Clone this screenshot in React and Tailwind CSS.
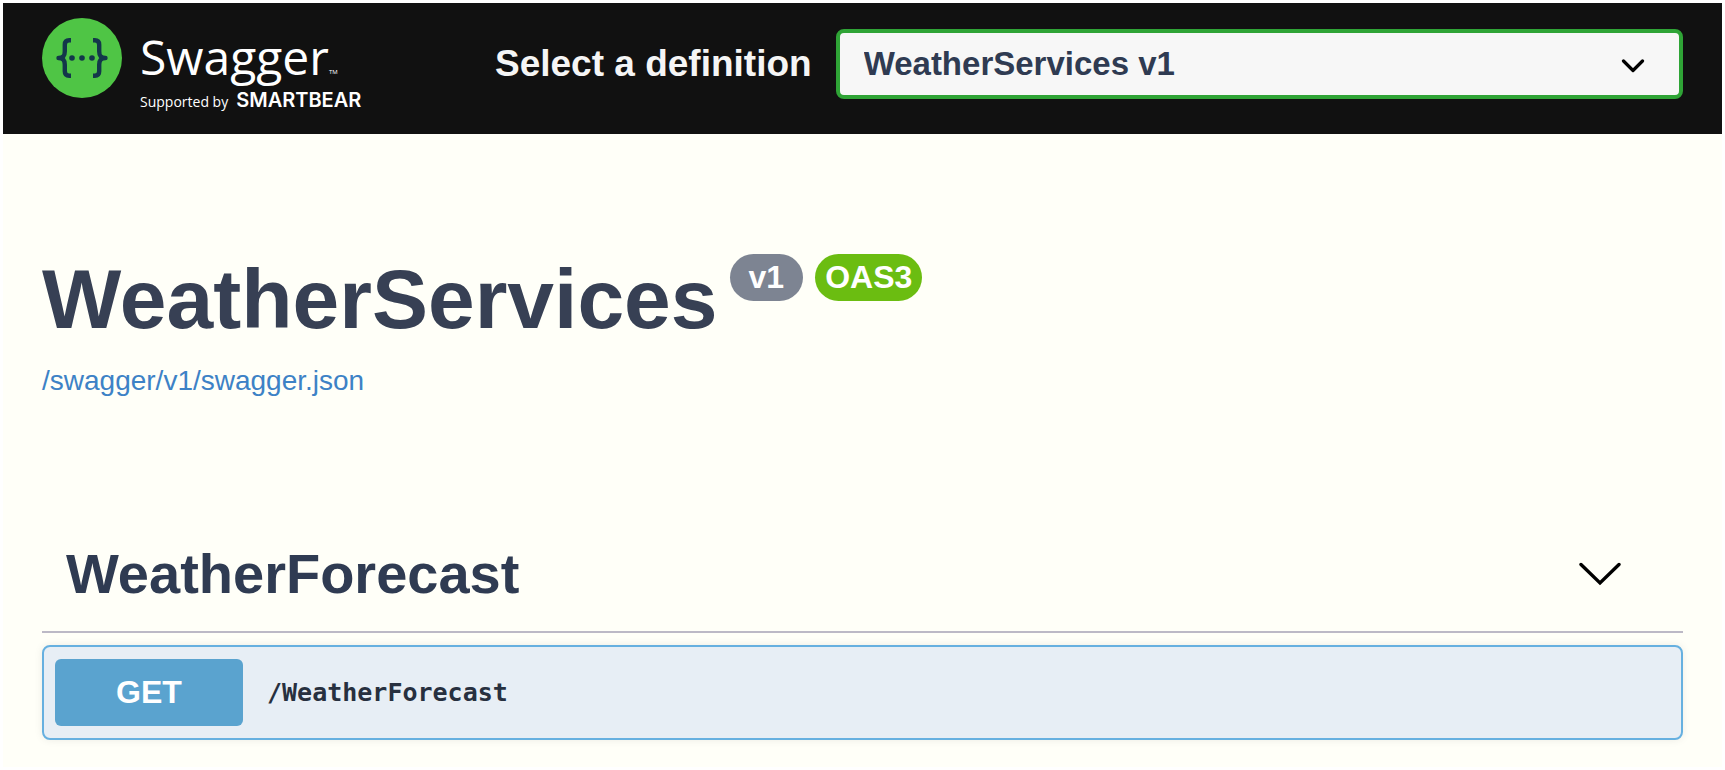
import React from "react";

function SwaggerLogo() {
  return (
    <a href="#" className="flex w-[453px] shrink-0 items-start gap-[18px] text-white">
      <svg viewBox="0 0 80 80" className="h-20 w-20 shrink-0" aria-hidden="true">
        <circle cx="40" cy="40" r="40" fill="#4fc545" />
        <g fill="none" stroke="#13374a" strokeWidth="4.4" strokeLinejoin="round">
          <path d="M29 22.2h-1.800c-2.800 0-4.400 1.700-4.400 4.500v6.500c0 4.500-1.500 6.800-6.300 6.800 4.800 0 6.300 2.300 6.300 6.800v6.500c0 2.800 1.600 4.500 4.400 4.500h1.800" />
          <path d="M51 22.200h1.800c2.800 0 4.400 1.700 4.400 4.500v6.500c0 4.500 1.500 6.800 6.300 6.800-4.800 0-6.300 2.300-6.300 6.800v6.500c0 2.800-1.600 4.500-4.400 4.500h-1.800" />
        </g>
        <g fill="#13374a">
          <circle cx="30" cy="40" r="2.800" />
          <circle cx="40" cy="40" r="2.800" />
          <circle cx="50" cy="40" r="2.800" />
        </g>
      </svg>
      <div className="pt-2 font-['Open_Sans',sans-serif]">
        <div className="flex items-end leading-[62px]">
          <span className="text-[48px]">Swagger</span>
          <span className="pb-1 text-[6px] leading-6">TM</span>
        </div>
        <div className="flex items-baseline gap-2 leading-6">
          <span className="text-[14px]">Supported by</span>
          <span className="font-['Inter',sans-serif] text-[20px] font-semibold">SMARTBEAR</span>
        </div>
      </div>
    </a>
  );
}

function TopBar() {
  return (
    <header className="flex items-start bg-[#111111] px-[39px] pt-[15px] pb-5">
      <SwaggerLogo />
      <div className="flex h-[81px] flex-1 items-center pt-[11px]">
        <label htmlFor="definition" className="shrink-0 pr-6 text-[37px] leading-[70px] font-bold text-[#f5f5f5]">
          Select a definition
        </label>
        <div className="relative flex-1">
          <select
            id="definition"
            className="block h-[70px] w-full appearance-none rounded-lg border-4 border-[#2fa436] bg-[#f7f7f7] pr-16 pl-6 text-[33px] font-bold text-[#2f3b52]"
          >
            <option>WeatherServices v1</option>
          </select>
          <svg
            viewBox="0 0 24 14"
            className="pointer-events-none absolute top-[30px] right-[38px] h-[14px] w-6"
            fill="none"
            stroke="#000"
            strokeWidth="3.200"
            strokeLinecap="round"
            strokeLinejoin="round"
            aria-hidden="true"
          >
            <path d="M2.500 2l9.500 9.500L21.500 2" />
          </svg>
        </div>
      </div>
    </header>
  );
}

function ApiInfo() {
  return (
    <section className="pt-[111px]">
      <div className="flex items-start">
        <h1 className="pt-[6px] text-[84px] leading-[96px] font-bold">WeatherServices</h1>
        <span className="mt-[9px] ml-3 rounded-full bg-[#7d8492] px-[19px] text-[32px] leading-[47px] font-bold text-white">v1</span>
        <span className="mt-[9px] ml-3 rounded-full bg-[#6bbd11] px-[10px] text-[32px] leading-[47px] font-bold text-white">OAS3</span>
      </div>
      <a href="/swagger/v1/swagger.json" className="mt-[18px] inline-block text-[28px] leading-8 text-[#3d82c6]">
        /swagger/v1/swagger.json
      </a>
    </section>
  );
}

function TagSection() {
  return (
    <section className="pt-[144px]">
      <button type="button" className="flex w-full items-center justify-between border-b-2 border-[#bcb9c6] pr-[62px] pb-6 pl-6 text-left">
        <h2 className="text-[56px] leading-[66px] font-bold text-[#2f3b52]">WeatherForecast</h2>
        <svg
          viewBox="0 0 42 24"
          className="h-6 w-[42px]"
          fill="none"
          stroke="#000"
          strokeWidth="3.400"
          strokeLinecap="round"
          aria-hidden="true"
        >
          <path d="M2 2.500l19 18.500L40 2.500" />
        </svg>
      </button>
      <button
        type="button"
        className="mt-3 flex w-full items-center gap-6 rounded-lg border-2 border-[#66b0e0] bg-[#e7eef5] px-[11px] py-3 text-left shadow-[0_0_8px_rgba(0,0,0,0.08)]"
      >
        <span className="w-[188px] rounded-md bg-[#5aa3cf] text-center text-[32px] leading-[67px] font-bold text-white">GET</span>
        <span className="font-['DejaVu_Sans_Mono',monospace] text-[25px] font-bold text-[#27303f]">/WeatherForecast</span>
      </button>
    </section>
  );
}

export default function App() {
  return (
    <div className="min-h-screen bg-white p-[3px] font-['Liberation_Sans',sans-serif] text-[#374054]">
      <div className="min-h-[calc(100vh-6px)] bg-[#fffff8]">
        <TopBar />
        <main className="px-[39px]">
          <ApiInfo />
          <TagSection />
        </main>
      </div>
    </div>
  );
}
